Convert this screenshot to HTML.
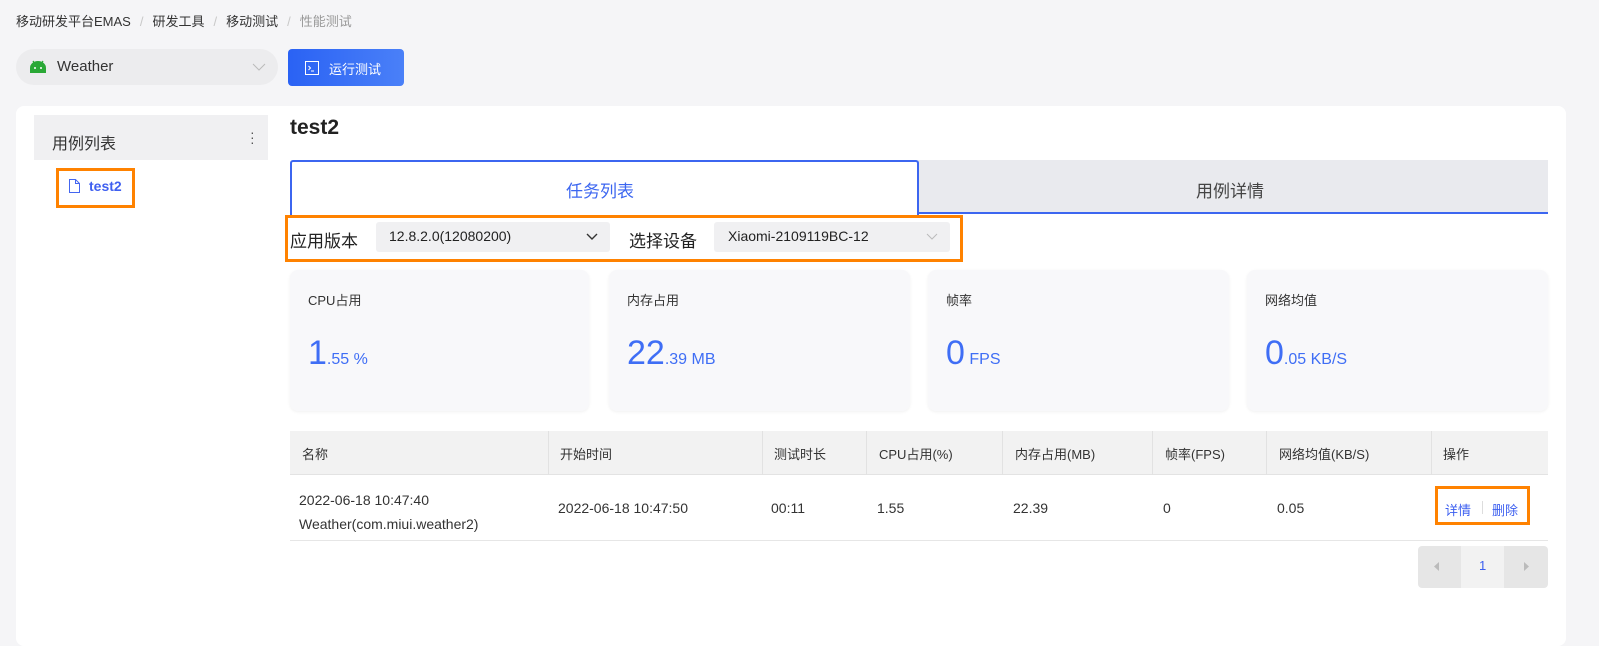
<!DOCTYPE html>
<html><head><meta charset="utf-8"><style>
*{box-sizing:border-box;margin:0;padding:0}
body{width:1599px;height:628px;background:#f5f5f7;font-family:"Liberation Sans","Noto Sans CJK SC",sans-serif;color:#333;position:relative;overflow:hidden}
.a{position:absolute}
.bc{left:16px;top:11px;font-size:13px;color:#333}
.bc span.s{color:#c8c8c8;margin:0 9px}
.sel{left:16px;top:49px;width:262px;height:36px;border-radius:18px;background:#ececee}
.btn{left:288px;top:49px;width:116px;height:37px;border-radius:4px;background:linear-gradient(90deg,#2a62f4,#4a80f8);color:#fff;font-size:13px}
.card{left:16px;top:106px;width:1550px;height:540px;background:#fff;border-radius:8px}
.stat{background:#f8f8fa;border-radius:8px;top:270px;height:141px;box-shadow:0 1px 3px rgba(0,0,0,.06)}
.stat .l{position:absolute;left:18px;top:20px;font-size:13px;color:#333}
.stat .v{position:absolute;left:18px;top:64px;color:#3f6ef5;font-size:16px;white-space:nowrap}
.stat .v b{font-weight:normal;font-size:34px}
.th{top:431px;height:44px;background:#f2f2f2;left:290px;width:1258px;border-bottom:1px solid #e3e3e3}
.c{position:absolute;font-size:13px;color:#333}
.vl{position:absolute;top:431px;height:44px;width:1px;background:#e2e2e2}
</style></head><body>
<div class="a bc">移动研发平台EMAS<span class="s">/</span>研发工具<span class="s">/</span>移动测试<span class="s">/</span><span style="color:#999">性能测试</span></div>
<div class="a sel">
<svg class="a" style="left:13px;top:10px" width="18" height="15" viewBox="0 0 18 15"><path d="M1 14V9a8 7 0 0 1 16 0v5z" fill="#2aa836"/><path d="M4 2l2 3M14 2l-2 3" stroke="#2aa836" stroke-width="1.3"/><circle cx="6" cy="9" r="1" fill="#fff"/><circle cx="12" cy="9" r="1" fill="#fff"/></svg>
<div class="a" style="left:41px;top:9px;font-size:15px;color:#333">Weather</div>
<svg class="a" style="left:236px;top:14px" width="14" height="9"><path d="M1 1l6 6 6-6" stroke="#bbb" fill="none"/></svg>
</div>
<div class="a btn"><svg class="a" style="left:17px;top:12px" width="14" height="14"><rect x=".5" y=".5" width="13" height="13" fill="none" stroke="#fff"/><path d="M3.5 5l2 2-2 2M6 10h3" stroke="#fff" fill="none"/></svg><span class="a" style="left:41px;top:10px">运行测试</span></div>
<div class="a card"></div>
<div class="a" style="left:34px;top:115px;width:234px;height:45px;background:#f0f0f2"></div>
<div class="a" style="left:52px;top:130px;font-size:16px">用例列表</div>
<div class="a" style="left:250px;top:130px;font-size:14px;line-height:5px;color:#555">·<br>·<br>·</div>
<div class="a" style="left:56px;top:168px;width:79px;height:40px;border:3px solid #ff8200"></div>
<svg class="a" style="left:69px;top:179px" width="11" height="14"><path d="M.5.5h6l4 4v9h-10z M6.5.5v4h4" fill="none" stroke="#4466f0"/></svg>
<div class="a" style="left:89px;top:178px;font-size:14px;font-weight:bold;color:#3f5ff0">test2</div>
<div class="a" style="left:290px;top:116px;font-size:21px;font-weight:bold;color:#222">test2</div>
<div class="a" style="left:918px;top:160px;width:630px;height:54px;background:#e9eaee;border-bottom:2px solid #3c66f0"></div>
<div class="a" style="left:290px;top:160px;width:629px;height:55px;background:#fff;border:2px solid #3c66f0;border-bottom:none;border-radius:3px 3px 0 0"></div>
<div class="a" style="left:566px;top:177px;font-size:17px;color:#3c66f0">任务列表</div>
<div class="a" style="left:1196px;top:177px;font-size:17px;color:#444">用例详情</div>
<div class="a" style="left:285px;top:215px;width:678px;height:47px;border:3px solid #ff8200"></div>
<div class="a" style="left:290px;top:227px;font-size:17px;color:#222">应用版本</div>
<div class="a" style="left:376px;top:222px;width:234px;height:30px;background:#f0f0f2;border-radius:3px"></div>
<div class="a" style="left:389px;top:228px;font-size:14px;color:#222">12.8.2.0(12080200)</div>
<svg class="a" style="left:586px;top:233px" width="12" height="8"><path d="M1 1l5 5 5-5" stroke="#333" fill="none" stroke-width="1.4"/></svg>
<div class="a" style="left:629px;top:227px;font-size:17px;color:#222">选择设备</div>
<div class="a" style="left:714px;top:222px;width:236px;height:30px;background:#f0f0f2;border-radius:3px"></div>
<div class="a" style="left:728px;top:228px;font-size:14px;color:#222">Xiaomi-2109119BC-12</div>
<svg class="a" style="left:926px;top:233px" width="12" height="8"><path d="M1 1l5 5 5-5" stroke="#bbb" fill="none"/></svg>
<div class="a stat" style="left:290px;width:299px"><div class="l">CPU占用</div><div class="v"><b>1</b>.55 %</div></div>
<div class="a stat" style="left:609px;width:301px"><div class="l">内存占用</div><div class="v"><b>22</b>.39 MB</div></div>
<div class="a stat" style="left:928px;width:301px"><div class="l">帧率</div><div class="v"><b>0</b> FPS</div></div>
<div class="a stat" style="left:1247px;width:301px"><div class="l">网络均值</div><div class="v"><b>0</b>.05 KB/S</div></div>
<div class="a th"></div>
<div class="vl" style="left:548px"></div><div class="vl" style="left:762px"></div><div class="vl" style="left:866px"></div><div class="vl" style="left:1002px"></div><div class="vl" style="left:1152px"></div><div class="vl" style="left:1266px"></div><div class="vl" style="left:1431px"></div>
<div class="c" style="left:302px;top:444px">名称</div>
<div class="c" style="left:560px;top:444px">开始时间</div>
<div class="c" style="left:774px;top:444px">测试时长</div>
<div class="c" style="left:879px;top:444px">CPU占用(%)</div>
<div class="c" style="left:1015px;top:444px">内存占用(MB)</div>
<div class="c" style="left:1165px;top:444px">帧率(FPS)</div>
<div class="c" style="left:1279px;top:444px">网络均值(KB/S)</div>
<div class="c" style="left:1443px;top:444px">操作</div>
<div class="c" style="left:299px;top:488px;line-height:24px;font-size:14px">2022-06-18 10:47:40<br>Weather(com.miui.weather2)</div>
<div class="c" style="left:558px;top:500px;font-size:14px">2022-06-18 10:47:50</div>
<div class="c" style="left:771px;top:500px;font-size:14px">00:11</div>
<div class="c" style="left:877px;top:500px;font-size:14px">1.55</div>
<div class="c" style="left:1013px;top:500px;font-size:14px">22.39</div>
<div class="c" style="left:1163px;top:500px;font-size:14px">0</div>
<div class="c" style="left:1277px;top:500px;font-size:14px">0.05</div>
<div class="a" style="left:1435px;top:486px;width:95px;height:39px;border:3px solid #ff8200"></div>
<div class="c" style="left:1445px;top:500px;color:#3c5ff0">详情</div>
<div class="a" style="left:1482px;top:501px;width:1px;height:13px;background:#ddd"></div>
<div class="c" style="left:1492px;top:500px;color:#3c5ff0">删除</div>
<div class="a" style="left:290px;top:540px;width:1258px;height:1px;background:#e6e6e6"></div>
<div class="a" style="left:1418px;top:546px;width:130px;height:42px;background:#e6e6e6;border-radius:4px"></div>
<div class="a" style="left:1461px;top:546px;width:43px;height:42px;background:#f2f2f2"></div>
<div class="c" style="left:1479px;top:558px;color:#3c5ff0">1</div>
<svg class="a" style="left:1434px;top:562px" width="6" height="9"><path d="M5 0v9L0 4.5z" fill="#bbb"/></svg>
<svg class="a" style="left:1524px;top:562px" width="6" height="9"><path d="M0 0v9l5-4.5z" fill="#bbb"/></svg>
</body></html>
